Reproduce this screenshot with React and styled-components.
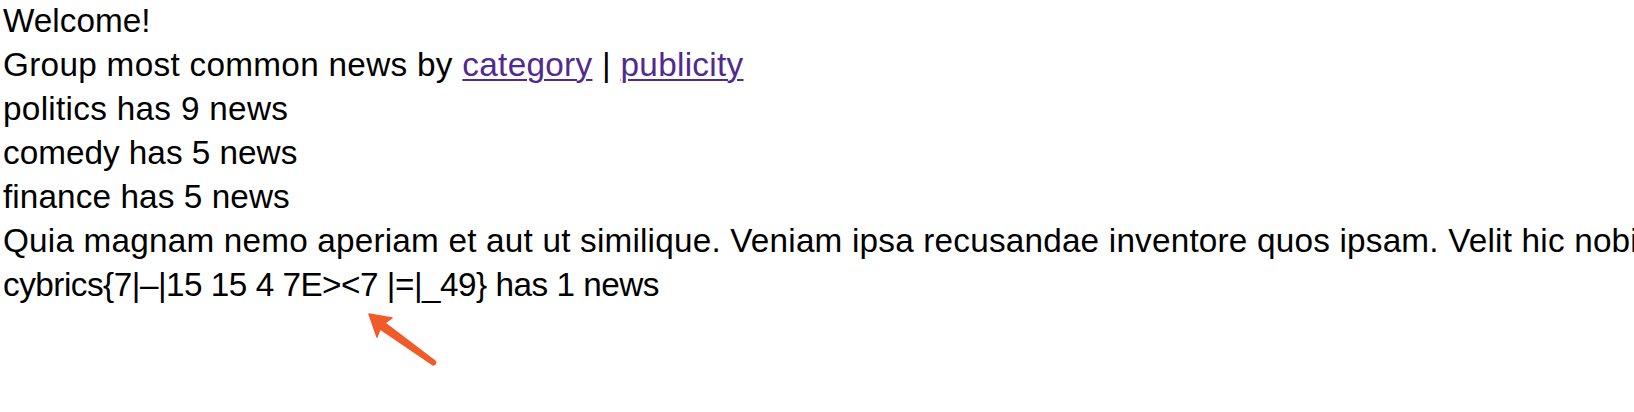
import React from 'react';
import styled, { createGlobalStyle } from 'styled-components';

const GlobalStyle = createGlobalStyle`
    html, body {
        margin: 0;
        padding: 0;
        background: #ffffff;
        overflow: hidden;
    }
`;

const Page = styled.div`
    position: relative;
    width: 1634px;
    height: 412px;
    overflow: hidden;
    padding: 0 0 0 3px;
    margin-top: -1px;
    box-sizing: border-box;
    font-family: "Liberation Sans", Arial, sans-serif;
    font-size: 33.3px;
    line-height: 44px;
    color: #000000;
    white-space: nowrap;
`;

const Line = styled.div`
    display: block;
    letter-spacing: ${(p) => p.$spacing || 0}px;
`;

const NavLink = styled.a`
    color: #512a8f;
    text-decoration: underline;
    text-decoration-thickness: 2px;
    text-underline-offset: 3px;
`;

const Arrow = styled.svg`
    position: absolute;
    left: 360px;
    top: 308px;
    pointer-events: none;
`;

const categories = [
    { name: 'politics', count: 9, spacing: 0.3 },
    { name: 'comedy', count: 5, spacing: 0 },
    { name: 'finance', count: 5, spacing: 0.1 },
    {
        name: 'Quia magnam nemo aperiam et aut ut similique. Veniam ipsa recusandae inventore quos ipsam. Velit hic nobis quis dolores.',
        count: 1,
        spacing: 0.2,
    },
    { name: 'cybrics{7|\u2013|15 15 4 7E><7 |=|_49}', count: 1, spacing: -0.5 },
];

const App = () => {
    return (
        <Page>
            <GlobalStyle />
            <Line>Welcome!</Line>
            <Line $spacing={0.3}>
                Group most common news by <NavLink href="#category">category</NavLink> |{' '}
                <NavLink href="#publicity">publicity</NavLink>
            </Line>
            {categories.map((c) => (
                <Line key={c.name} $spacing={c.spacing}>
                    {c.name} has {c.count} news
                </Line>
            ))}
            <Arrow width="90" height="70" viewBox="0 0 90 70">
                {/* annotation arrow pointing up-left */}
                <path
                    d="M9 7 L32 11 L25 16 L75 54 Q77 57 73 58 L20 22 L17 30 Z"
                    fill="#f15a29"
                    stroke="#f15a29"
                    strokeWidth="1.5"
                    strokeLinejoin="round"
                />
            </Arrow>
        </Page>
    );
};

export default App;
